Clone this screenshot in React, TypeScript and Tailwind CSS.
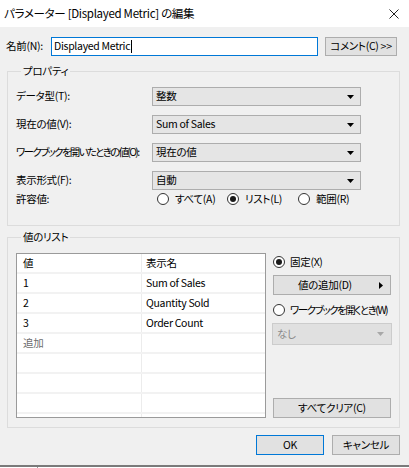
import React from "react";

const rows = [
  { value: "値", name: "表示名" },
  { value: "1", name: "Sum of Sales" },
  { value: "2", name: "Quantity Sold" },
  { value: "3", name: "Order Count" },
  { value: "追加", name: "", muted: true },
  { value: "", name: "" },
  { value: "", name: "" },
  { value: "", name: "" },
  { value: "", name: "" },
];

function Arrow({ disabled = false }: { disabled?: boolean }) {
  return (
    <svg width="7" height="4" viewBox="0 0 7 4" className="shrink-0">
      <path d="M0 0H7L3.5 4Z" fill={disabled ? "#a8a8a8" : "#000"} />
    </svg>
  );
}

function Select({ value }: { value: string }) {
  return (
    <div className="flex h-[19px] w-[209px] items-center justify-between border border-[#adadad] bg-[#e5e5e5] pl-[3px] pr-[6px]">
      <span>{value}</span>
      <Arrow />
    </div>
  );
}

function Radio({ checked = false }: { checked?: boolean }) {
  return (
    <span className="flex h-[12px] w-[12px] shrink-0 items-center justify-center rounded-full border border-[#333] bg-white">
      {checked && <span className="h-[6px] w-[6px] rounded-full bg-[#1a1a1a]" />}
    </span>
  );
}

function PropRow({
  label,
  value,
  tight = false,
}: {
  label: string;
  value: string;
  tight?: boolean;
}) {
  return (
    <div className="flex h-[19px] items-center">
      <span className={`w-[136px] ${tight ? "tracking-[-1.7px]" : ""}`}>{label}</span>
      <Select value={value} />
    </div>
  );
}

export default function App() {
  return (
    <div className="flex h-[468px] w-[409px] flex-col overflow-hidden whitespace-nowrap bg-[#f0f0f0] font-['Noto_Sans_CJK_JP',sans-serif] text-[10.5px] leading-none tracking-[-0.3px] text-black [font-feature-settings:'palt']">
      <div className="flex h-[27px] shrink-0 items-center justify-between bg-white pl-[4px] pr-[10px] text-[11.5px]">
        <span>パラメーター [Displayed Metric] の編集</span>
        <svg width="10" height="10" viewBox="0 0 10 10">
          <path d="M0.5 0.5L9.5 9.5M9.5 0.5L0.5 9.5" stroke="#222" strokeWidth="1" />
        </svg>
      </div>

      <div className="mt-[10px] flex h-[19px] items-center pl-[6px]">
        <span className="w-[45px]">名前(N):</span>
        <div className="flex h-[19px] w-[267px] items-center border border-[#0078d7] bg-white pl-[2px]">
          Displayed Metric
          <span className="ml-[1px] h-[13px] w-[1px] bg-black" />
        </div>
        <button className="ml-[7px] flex h-[19px] w-[72px] items-center justify-center border border-[#adadad] bg-[#e1e1e1]">
          コメント(C) &gt;&gt;
        </button>
      </div>

      <fieldset className="mx-[7px] mt-[7px] h-[163px] w-[393px] border border-[#dcdcdc] pl-[8px] pt-[8px]">
        <legend className="ml-[5px] px-[2px] leading-[16px]">プロパティ</legend>
        <div className="flex flex-col gap-[9px]">
          <PropRow label="データ型(T):" value="整数" />
          <PropRow label="現在の値(V):" value="Sum of Sales" />
          <PropRow label="ワークブックを開いたときの値(O):" value="現在の値" tight />
          <PropRow label="表示形式(F):" value="自動" />
        </div>
        <div className="flex h-[18px] items-center">
          <span className="w-[141px]">許容値:</span>
          <Radio />
          <span className="ml-[6px] w-[52px]">すべて(A)</span>
          <Radio checked />
          <span className="ml-[6px] w-[53px]">リスト(L)</span>
          <Radio />
          <span className="ml-[6px]">範囲(R)</span>
        </div>
      </fieldset>

      <fieldset className="mx-[7px] mt-[3px] h-[199px] w-[393px] border border-[#dcdcdc] pl-[8px] pt-[8px]">
        <legend className="ml-[5px] px-[2px] leading-[16px]">値のリスト</legend>
        <div className="flex">
          <div className="h-[165px] w-[250px] overflow-hidden border border-[#9a9a9a] bg-white">
            {rows.map((row, i) => (
              <div key={i} className="flex h-[20px] border-b-2 border-[#f2f2f2]">
                <div className="flex w-[125px] items-center border-r border-[#ececec] pl-[6px]">
                  <span className={row.muted ? "text-[#6d6d6d]" : ""}>{row.value}</span>
                </div>
                <div className="flex items-center pl-[4px]">{row.name}</div>
              </div>
            ))}
          </div>

          <div className="ml-[7px] flex h-[165px] w-[119px] flex-col">
            <div className="mt-[1px] flex h-[16px] items-center">
              <Radio checked />
              <span className="ml-[5px]">固定(X)</span>
            </div>
            <button className="mt-[5px] flex h-[20px] w-[118px] items-center border border-[#adadad] bg-[#e1e1e1] pl-[24px] pr-[7px]">
              <span className="flex-1 text-left">値の追加(D)</span>
              <svg width="4" height="7" viewBox="0 0 4 7">
                <path d="M0 0V7L4 3.5Z" fill="#000" />
              </svg>
            </button>
            <div className="mt-[7px] flex h-[16px] items-center">
              <Radio />
              <span className="ml-[5px] tracking-[-1.5px]">ワークブックを開くとき(W)</span>
            </div>
            <div className="-ml-[1px] mt-[5px] flex h-[22px] w-[120px] items-center justify-between border border-[#cccccc] bg-[#e0e0e0] pl-[4px] pr-[7px] text-[#8a8a8a]">
              <span>なし</span>
              <Arrow disabled />
            </div>
            <button className="mt-auto flex h-[20px] w-[118px] items-center justify-center border border-[#adadad] bg-[#e1e1e1]">
              すべてクリア(C)
            </button>
          </div>
        </div>
      </fieldset>

      <div className="mt-[7px] flex justify-end gap-[8px] pr-[9px]">
        <button className="flex h-[20px] w-[68px] items-center justify-center border border-[#0078d7] bg-[#e1e1e1]">
          OK
        </button>
        <button className="flex h-[20px] w-[68px] items-center justify-center border border-[#adadad] bg-[#e1e1e1]">
          キャンセル
        </button>
      </div>

      <div className="mt-[10px] h-[2px] shrink-0 bg-[#7a7a7a]" />
      <div className="flex flex-1 bg-white">
        <div className="ml-[37px] w-[1px] bg-[#9a9a9a]" />
      </div>
    </div>
  );
}
